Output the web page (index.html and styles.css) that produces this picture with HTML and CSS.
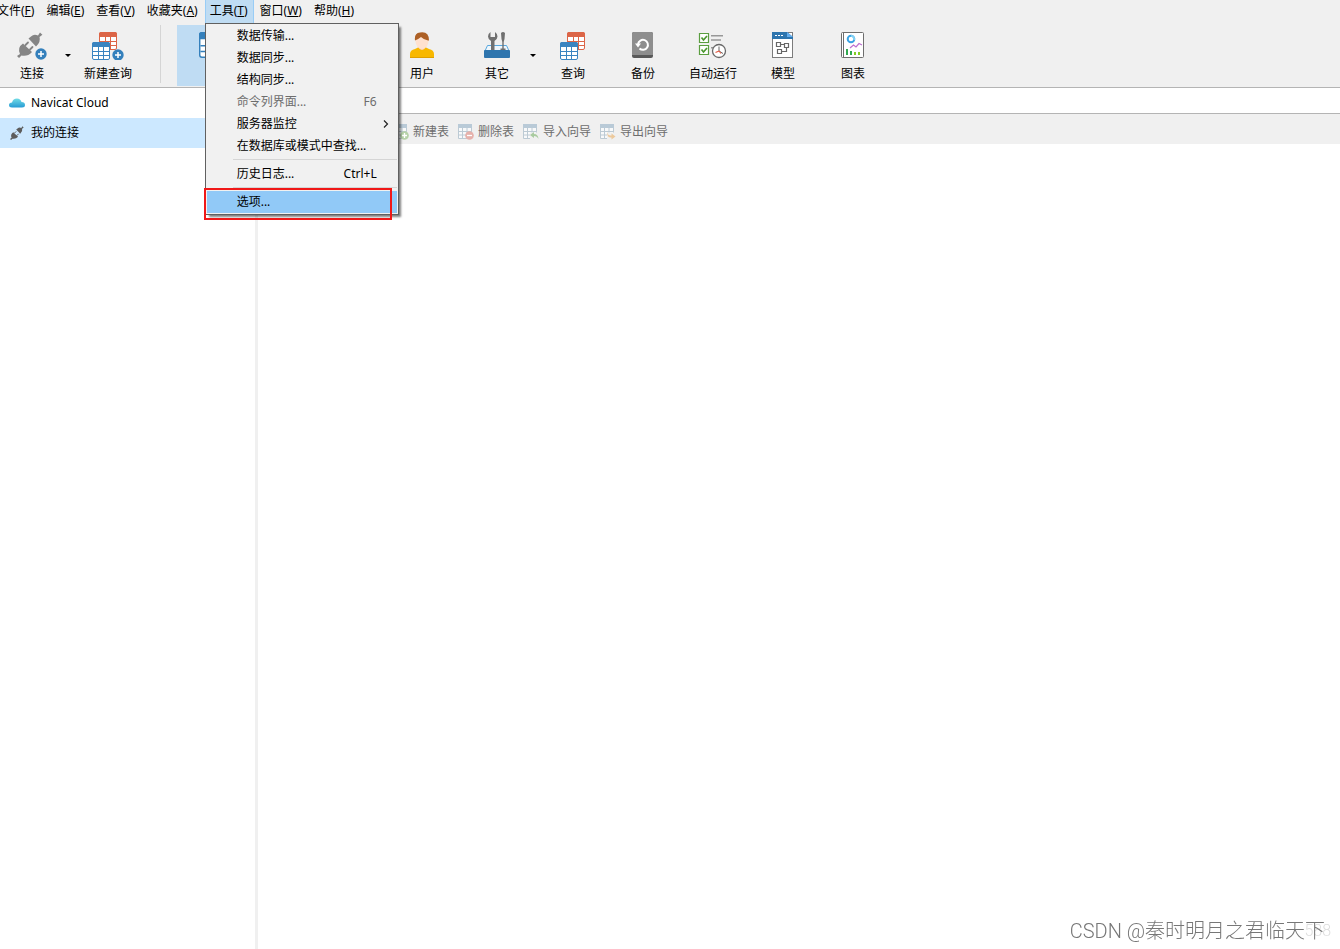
FILE: index.html
```html
<!DOCTYPE html>
<html lang="zh-CN">
<head>
<meta charset="utf-8">
<title>Navicat</title>
<link rel="stylesheet" href="styles.css">
</head>
<body>
<svg class="defs" aria-hidden="true">
  <symbol id="grid" viewBox="0 0 18 18">
    <rect x=".5" y=".5" width="17" height="17" rx="1.5" fill="#fff" stroke="currentColor"/>
    <path d="M0 5V2Q0 0 2 0H16Q18 0 18 2V5Z" fill="currentColor"/>
    <path d="M1 9.5H17M1 13.5H17M6.500 5V17M11.500 5V17" stroke="currentColor" fill="none"/>
  </symbol>
  <symbol id="tables" viewBox="0 0 32 28">
    <use href="#grid" x="7" y="0" width="18" height="18" color="#dc6547"/>
    <use href="#grid" x="0" y="10" width="18" height="18" color="#3a84c0"/>
  </symbol>
  <symbol id="plug" viewBox="0 0 26 26">
    <g fill="currentColor" stroke="currentColor">
      <path d="M11.500 6.500 14 4.500Q17 1.500 21 3.500L23 .6 25.400 2.700 22.500 5Q24 10 19 14.500Z" stroke="none"/>
      <path d="M3 22Q0 15.500 6 11.500L15 20Q10.500 25 4.500 23.500L2 26 0 24Z" stroke="none"/>
      <path d="M8.500 13 11 10.500M13 17.500 15.500 15" stroke-width="1.800" stroke-linecap="round"/>
    </g>
  </symbol>
  <symbol id="plus" viewBox="0 0 12 12">
    <circle cx="6" cy="6" r="5.700" fill="#3480bc"/>
    <path d="M6 3V9M3 6H9" stroke="#fff" stroke-width="1.500"/>
  </symbol>
  <symbol id="sheet" viewBox="0 0 16 16">
    <path d="M.5 .5H13.500V14.500H.5Z" fill="#f8f9fa" stroke="#bccad4"/>
    <path d="M0 0H14V4H0Z" fill="#b9cad7"/>
    <path d="M1 7.500H13M1 11H13M4.500 4V14M9 4V14" stroke="#bccad4"/>
  </symbol>
</svg>

<nav class="menubar" aria-label="主菜单">
  <button type="button" class="menubar-item">文件(<u>F</u>)</button>
  <button type="button" class="menubar-item">编辑(<u>E</u>)</button>
  <button type="button" class="menubar-item">查看(<u>V</u>)</button>
  <button type="button" class="menubar-item">收藏夹(<u>A</u>)</button>
  <div class="menu-anchor">
    <button type="button" class="menubar-item is-open" aria-expanded="true">工具(<u>T</u>)</button>
    <div class="dropdown" role="menu">
      <button type="button" role="menuitem" class="entry">数据传输...</button>
      <button type="button" role="menuitem" class="entry">数据同步...</button>
      <button type="button" role="menuitem" class="entry">结构同步...</button>
      <button type="button" role="menuitem" class="entry" disabled><span>命令列界面...</span><span>F6</span></button>
      <button type="button" role="menuitem" class="entry has-sub"><span>服务器监控</span>
        <svg width="6" height="8" viewBox="0 0 6 8"><path d="M1 .5 4.500 4 1 7.500" fill="none" stroke="#222" stroke-width="1.200"/></svg>
      </button>
      <button type="button" role="menuitem" class="entry">在数据库或模式中查找...</button>
      <hr class="rule">
      <button type="button" role="menuitem" class="entry"><span>历史日志...</span><span>Ctrl+L</span></button>
      <hr class="rule">
      <button type="button" role="menuitem" class="entry is-selected">选项...</button>
      <div class="marker"></div>
    </div>
  </div>
  <button type="button" class="menubar-item">窗口(<u>W</u>)</button>
  <button type="button" class="menubar-item">帮助(<u>H</u>)</button>
</nav>

<header class="toolbar">
  <button type="button" class="tool tool-connect">
    <svg width="32" height="28" viewBox="0 0 32 28"><use href="#plug" x="1" y="0" width="26" height="26" color="#858585"/><use href="#plus" x="19" y="16" width="12" height="12"/></svg>
    连接
  </button>
  <button type="button" class="caret" aria-label="连接选项"></button>
  <button type="button" class="tool tool-new">
    <svg width="32" height="28" viewBox="0 0 32 28"><use href="#tables" width="32" height="28"/><use href="#plus" x="20" y="17" width="12" height="12"/></svg>
    新建查询
  </button>
  <div class="divider"></div>
  <button type="button" class="tool is-active" aria-label="表">
    <svg width="26" height="26" viewBox="0 0 26 26"><use href="#grid" width="26" height="26" color="#3480bc"/></svg>
  </button>
  <button type="button" class="tool tool-user">
    <svg width="26" height="28" viewBox="0 0 26 28">
      <path d="M1 26V22Q1 18 6 17L10 15H16L20 17Q25 18 25 22V26Z" fill="#f8b800"/>
      <path d="M1 25.500H25" stroke="#dfa000"/>
      <path d="M10 12H16V16Q13 20 10 16Z" fill="#f8d3bf"/>
      <ellipse cx="13" cy="9" rx="6.500" ry="8" fill="#ffe1cf"/>
      <path d="M6 8.500Q5 1 11 .5Q20 -1 20 8.500H19Q15 8 12 5Q9 7.500 6 8.500Z" fill="#ad6026"/>
    </svg>
    用户
  </button>
  <button type="button" class="tool tool-other">
    <svg width="28" height="28" viewBox="0 0 28 28">
      <path d="M4.500 13.500H23.500L26.500 20H1.500Z" fill="#eef6fc" stroke="#58a8df"/>
      <path d="M7.500 0Q5 1.500 5 4.500Q5 7 8 9V20H11.500V9Q14.500 7 14.500 4.500Q14.500 1.500 12 0V5H7.500Z" fill="#707070"/>
      <path d="M18 1Q20 -1 22 1L21.500 7 20.700 10V16.500H22.500V18.500H17.500V16.500H19.300V10L18.500 7Z" fill="#707070"/>
      <rect x="1" y="18" width="26" height="8" rx="1" fill="#2e75ae"/>
    </svg>
    其它
  </button>
  <button type="button" class="caret caret-other" aria-label="其它选项"></button>
  <button type="button" class="tool">
    <svg width="26" height="28" viewBox="0 0 26 28"><use href="#tables" x="0" y="0" width="32" height="28"/></svg>
    查询
  </button>
  <button type="button" class="tool">
    <svg width="22" height="28" viewBox="0 0 22 28">
      <rect x="0" y="0" width="21" height="26" rx="2" fill="#595959"/>
      <path d="M0 2Q0 0 2 0H19Q21 0 21 2V23H0Z" fill="#8e8e8e"/>
      <path d="M7.500 16.500A5 5 0 1 0 6 12" fill="none" stroke="#fff" stroke-width="2"/>
      <path d="M3 11.500H9L6 15.500Z" fill="#fff"/>
    </svg>
    备份
  </button>
  <button type="button" class="tool">
    <svg width="30" height="28" viewBox="0 0 30 28">
      <path d="M1.500 1.500H10.500V10.500H1.500ZM1.500 13.500H10.500V22.500H1.500Z" fill="#fff" stroke="#5b9e40" stroke-width="1.200"/>
      <path d="M3.500 5.500 5.500 8 9 4M3.500 17.500 5.500 20 9 16" fill="none" stroke="#4c9730" stroke-width="1.700"/>
      <path d="M13 3.800H25M13 8H23M13 15.800H17" stroke="#989898" stroke-width="1.600"/>
      <circle cx="21" cy="19" r="6.500" fill="#fff" stroke="#686868" stroke-width="1.300"/>
      <path d="M21 14.500V19L25 21.500" stroke="#666" fill="none"/>
      <path d="M21 19 17.500 20.500M21 19 23 21.500" stroke="#e45a43" stroke-width="1.200"/>
    </svg>
    自动运行
  </button>
  <button type="button" class="tool">
    <svg width="22" height="28" viewBox="0 0 22 28">
      <rect x=".5" y=".5" width="20" height="25" fill="#fff" stroke="#7c7c7c"/>
      <path d="M0 0H15L21 5V7H0Z" fill="#2e75ae"/>
      <path d="M15 0 21 5H15Z" fill="#62aced"/>
      <path d="M3 3.500H5M6 3.500H8M9 3.500H11" stroke="#fff"/>
      <path d="M4.500 10.500H8.500V14.500H4.500ZM12.500 11.500H16.500V15.500H12.500ZM5.500 17.500H9.500V21.500H5.500ZM9 12.500H12M14.500 16V19.500H10" fill="none" stroke="#666" stroke-width="1.200"/>
    </svg>
    模型
  </button>
  <button type="button" class="tool">
    <svg width="24" height="28" viewBox="0 0 24 28">
      <rect x=".5" y=".5" width="22" height="25" rx="1" fill="#fff" stroke="#6e6e6e"/>
      <path d="M2.500 1V25" stroke="#6e6e6e"/>
      <circle cx="10" cy="7" r="3.300" fill="none" stroke="#39a3e4" stroke-width="2"/>
      <path d="M10 3.700A3.300 3.300 0 0 1 13 8" fill="none" stroke="#83d2f4" stroke-width="2"/>
      <path d="M9 16 12.500 13 15 15 18 11.500 21 13" fill="none" stroke="#bd70cf" stroke-width="1.200"/>
      <path d="M5 17H7V23H5ZM9 19H11V23H9Z" fill="#31a950"/>
      <path d="M13 20H15V23H13ZM17 20H19V23H17Z" fill="#82ce24"/>
    </svg>
    图表
  </button>
</header>

<div class="workspace">
  <aside class="sidebar">
    <a href="#cloud" class="node">
      <svg width="16" height="16" viewBox="0 0 16 16"><defs><linearGradient id="sky" x2="0" y2="1"><stop stop-color="#72dce6"/><stop offset="1" stop-color="#269bd4"/></linearGradient></defs><path d="M3 12.500Q0 12.500 0 10Q0 7.500 3 7.500Q4 3.500 8 3.500Q11.500 3.500 12.500 7Q16 7 16 10Q16 12.500 13 12.500Z" fill="url(#sky)"/></svg>
      Navicat Cloud
    </a>
    <a href="#mine" class="node is-current">
      <svg width="16" height="16" viewBox="0 0 16 16"><use href="#plug" x="1" y="1" width="14" height="14" color="#5c5c5c"/></svg>
      我的连接
    </a>
  </aside>
  <main class="content">
    <div class="tabs"></div>
    <div class="actions">
      <button type="button" class="action" disabled>
        <svg width="16" height="16" viewBox="0 0 16 16"><use href="#sheet" width="16" height="16"/><circle cx="11.500" cy="11.500" r="4.300" fill="#b6d2a8"/><path d="M11.500 9V14M9 11.500H14" stroke="#fff" stroke-width="1.300"/></svg>
        新建表
      </button>
      <button type="button" class="action" disabled>
        <svg width="16" height="16" viewBox="0 0 16 16"><use href="#sheet" width="16" height="16"/><circle cx="11.500" cy="11.500" r="4.300" fill="#e6b1ab"/><path d="M9 11.500H14" stroke="#fff" stroke-width="1.300"/></svg>
        删除表
      </button>
      <button type="button" class="action" disabled>
        <svg width="16" height="16" viewBox="0 0 16 16"><use href="#sheet" width="16" height="16"/><path d="M7 8.500H16V16H7Z" fill="#f0f0f0"/><path d="M7 11 11 8V10Q15 10 15.500 15Q14 12 11 12V14Z" fill="#a9cba0"/></svg>
        导入向导
      </button>
      <button type="button" class="action" disabled>
        <svg width="16" height="16" viewBox="0 0 16 16"><use href="#sheet" width="16" height="16"/><path d="M7 8.500H16V16H7Z" fill="#f0f0f0"/><path d="M7 8Q8 12 11.500 11.500V9.500L15.500 12.500 11.500 15.500V13.500Q7 14 7 8Z" fill="#ecc99c"/></svg>
        导出向导
      </button>
    </div>
  </main>
</div>
<div class="watermark">CSDN @秦时明月之君临天下</div>
</body>
</html>
```
FILE: styles.css
```css
* { box-sizing: border-box; }

body {
  display: flex;
  flex-direction: column;
  min-height: 100vh;
  margin: 0;
  overflow-x: hidden;
  background: #fff;
  color: #000;
  font: 12px/16px "Noto Sans", "Noto Sans CJK SC", sans-serif;
}

button {
  margin: 0;
  padding: 0;
  border: 0;
  background: none;
  color: inherit;
  font: inherit;
  white-space: nowrap;
}

svg { display: block; flex: none; }
.defs { position: absolute; width: 0; height: 0; }

/* Menu bar */
.menubar {
  display: flex;
  height: 23px;
  margin-left: -9px;
  background: #f0f0f0;
}
.menubar-item {
  height: 23px;
  padding: 0 5px 2px;
  border: 1px solid transparent;
  border-width: 0 1px;
}
.menubar-item.is-open {
  padding-left: 4px;
  border-color: #99cdf6;
  background: #bfdcf3;
}
.menu-anchor { position: relative; margin-left: 1px; }

.dropdown {
  position: absolute;
  z-index: 10;
  top: 23px;
  left: 0;
  width: 194px;
  padding: 1px;
  border: 1px solid #606060;
  background: #f1f1f1;
  box-shadow: 3px 3px 2px -1px rgba(0, 0, 0, .5);
}
.entry {
  display: flex;
  align-items: center;
  justify-content: space-between;
  width: 100%;
  height: 22px;
  padding: 0 20px 0 30px;
  text-align: left;
}
.entry:disabled { color: #6d6d6d; }
.entry.has-sub { padding-right: 8px; }
.entry.is-selected { background: #91c9f7; }
.rule {
  height: 1px;
  margin: 2px 0 3px 26px;
  border: 0;
  background: #d5d5d5;
}
.marker {
  position: absolute;
  left: -2px;
  bottom: -6px;
  width: 188px;
  height: 32px;
  border: 2px solid #f01818;
}

/* Main toolbar */
.toolbar {
  display: flex;
  height: 65px;
  padding-top: 2px;
  border-bottom: 1px solid #b4b4b4;
  background: #f0f0f0;
}
.tool {
  display: flex;
  flex: none;
  flex-direction: column;
  align-items: center;
  gap: 6px;
  width: 70px;
  height: 61px;
  padding-top: 7px;
}
.tool-connect { width: 64px; }
.tool-new { width: 72px; }
.tool-other { width: 80px; }
.tool.is-active { background: #bfdcf3; }
.tool-user { margin-left: 140px; }
.caret { width: 8px; height: 61px; }
.caret::before {
  content: "";
  display: block;
  width: 0;
  margin: 0 auto;
  border: 3px solid transparent;
  border-top-color: #000;
  border-bottom: 0;
}
.caret-other { margin: 0 1px 0 -8px; }
.divider {
  width: 1px;
  height: 58px;
  margin: 0 16px;
  background: #d5d5d5;
}

/* Workspace */
.workspace { display: flex; flex: 1; }
.sidebar {
  flex: none;
  width: 258px;
  border-right: 3px solid #f0f0f0;
}
.node {
  display: flex;
  align-items: center;
  gap: 6px;
  height: 30px;
  padding-left: 9px;
  color: inherit;
  text-decoration: none;
}
.node.is-current { background: #cce8ff; }
.content { flex: 1; min-width: 0; }
.tabs { height: 26px; border-bottom: 1px solid #b4b4b4; }
.actions {
  display: flex;
  align-items: center;
  gap: 9px;
  height: 30px;
  padding: 6px 0 0 135px;
  background: #f0f0f0;
}
.action {
  display: flex;
  align-items: center;
  gap: 4px;
  color: #6d6d6d;
}

.watermark {
  position: fixed;
  right: 15px;
  bottom: 4px;
  color: #777;
  font: 300 20px/28px Roboto, "Noto Sans CJK SC", sans-serif;
}
.watermark::after {
  content: "588";
  position: absolute;
  z-index: -1;
  right: -6px;
  bottom: 0;
  color: #ddd;
  font-size: 16px;
}
```
